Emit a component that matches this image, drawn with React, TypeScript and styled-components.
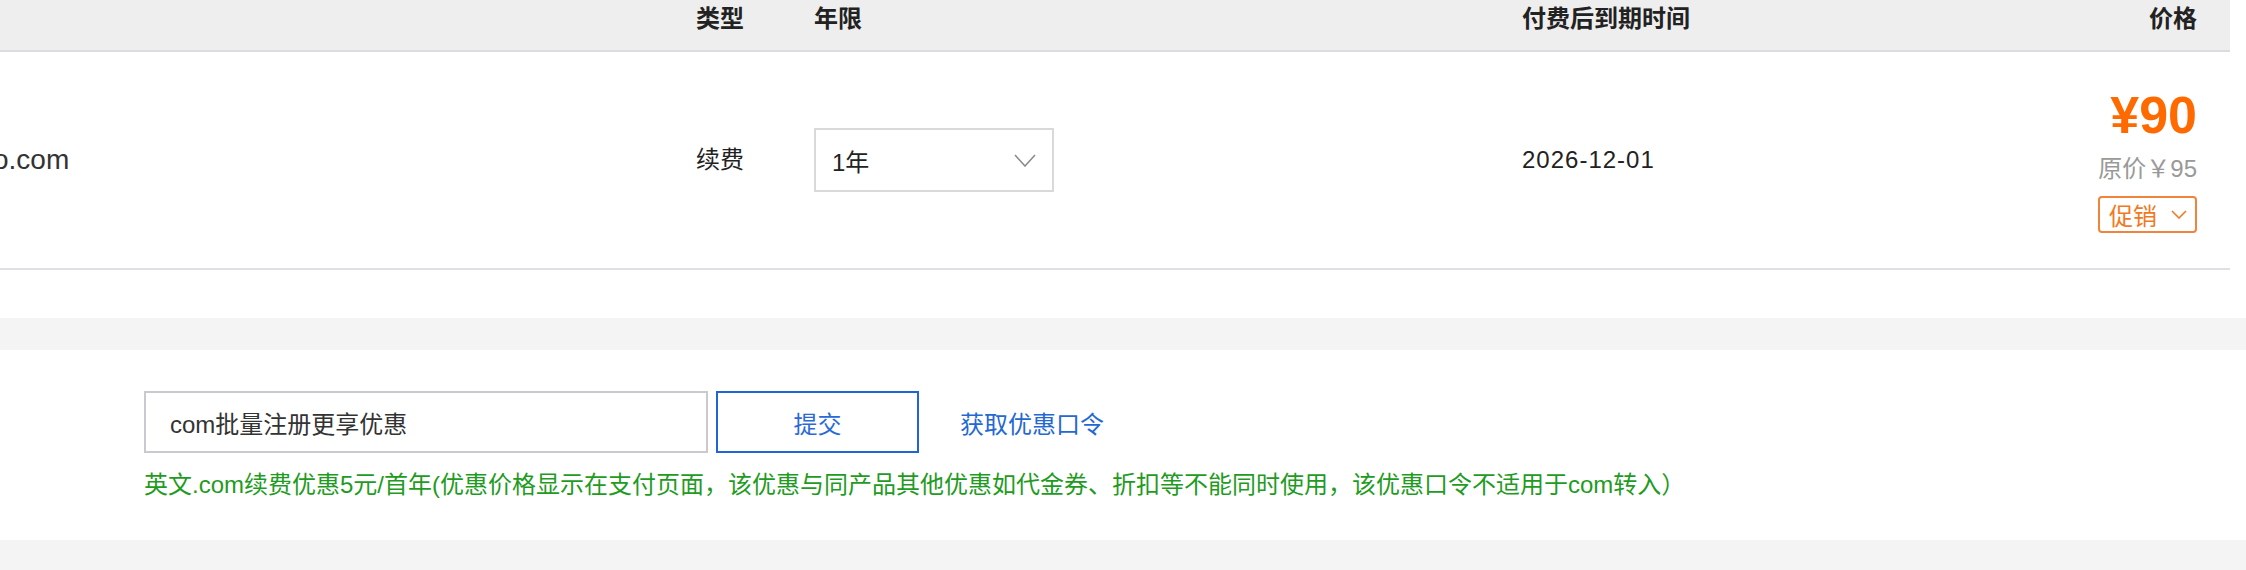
import React from 'react';
import styled, { createGlobalStyle } from 'styled-components';

const GlobalStyle = createGlobalStyle`
  html, body {
    margin: 0;
    padding: 0;
    background: #ffffff;
  }

  body {
    font-family: 'Liberation Sans', 'Noto Sans CJK SC', sans-serif;
    color: #333333;
    overflow: hidden;
  }
`;

const Page = styled.div`
  width: 2246px;
  display: flex;
  flex-direction: column;
`;

const Table = styled.div`
  width: 2230px;
  display: flex;
  flex-direction: column;
`;

const Grid = styled.div`
  display: grid;
  grid-template-columns: 696px 118px 708px 1fr auto;
  padding-right: 33px;
`;

const HeadRow = styled(Grid)`
  height: 52px;
  padding-top: 4px;
  box-sizing: border-box;
  background: #eeeeee;
  border-bottom: 2px solid #dcdce0;
  font-size: 24px;
  line-height: 30px;
  font-weight: 700;
  color: #222222;
`;

const HeadCell = styled.div<{ $right?: boolean }>`
  text-align: ${(props) => (props.$right ? 'right' : 'left')};
`;

const BodyRow = styled(Grid)`
  height: 218px;
  box-sizing: border-box;
  border-bottom: 2px solid #e0e0e4;
  align-items: center;
  font-size: 24px;
`;

const DomainCell = styled.div`
  overflow: hidden;
`;

const DomainName = styled.span`
  display: block;
  margin-left: -7px;
  font-size: 28px;
  color: #333333;
`;

const TextCell = styled.div<{ $spaced?: boolean }>`
  color: #222222;
  line-height: 24px;
  letter-spacing: ${(props) => (props.$spaced ? '1px' : '0')};
`;

const Select = styled.div`
  width: 240px;
  height: 64px;
  box-sizing: border-box;
  border: 2px solid #d9d9d9;
  padding: 0 16px 0 16px;
  display: flex;
  align-items: center;
  justify-content: space-between;
  color: #222222;
`;

const PriceCell = styled.div`
  display: flex;
  flex-direction: column;
  align-items: flex-end;
  margin-top: 3px;
`;

const Price = styled.div`
  font-size: 52px;
  line-height: 50px;
  font-weight: 700;
  color: #ff6a00;
`;

const OriginalPrice = styled.div`
  margin-top: 17px;
  font-size: 24px;
  line-height: 24px;
  color: #999999;
`;

const PromoTag = styled.div`
  margin-top: 15px;
  width: 99px;
  height: 37px;
  box-sizing: border-box;
  border: 2px solid #f0843a;
  border-radius: 4px;
  padding: 0 8px 0 9px;
  display: flex;
  align-items: center;
  justify-content: space-between;
  font-size: 24px;
  color: #f07a22;
`;

const Gap = styled.div`
  height: 48px;
`;

const Band = styled.div<{ $height: number }>`
  height: ${(props) => props.$height}px;
  background: #f4f4f4;
`;

const CouponPanel = styled.div`
  height: 190px;
  box-sizing: border-box;
  padding: 41px 0 0 144px;
  display: flex;
  flex-direction: column;
`;

const CouponForm = styled.div`
  display: flex;
  align-items: center;
`;

const CouponInput = styled.div`
  width: 564px;
  height: 62px;
  box-sizing: border-box;
  border: 2px solid #cacace;
  padding-left: 24px;
  display: flex;
  align-items: center;
  font-size: 24px;
  color: #333333;
`;

const SubmitButton = styled.div`
  margin-left: 8px;
  width: 203px;
  height: 62px;
  box-sizing: border-box;
  border: 2px solid #1f66d4;
  display: flex;
  align-items: center;
  justify-content: center;
  font-size: 24px;
  color: #2a6ad6;
`;

const CouponLink = styled.a`
  margin-left: 41px;
  font-size: 24px;
  color: #2468d2;
  text-decoration: none;
`;

const CouponNote = styled.div`
  margin-top: 20px;
  font-size: 24px;
  line-height: 24px;
  color: #1f9b1f;
  white-space: nowrap;
`;

const Chevron = ({ w, h, color }: { w: number; h: number; color: string }) => (
  <svg width={w} height={h} viewBox={`0 0 ${w} ${h}`} fill='none'>
    <polyline
      points={`1,1 ${w / 2},${h - 1} ${w - 1},1`}
      stroke={color}
      strokeWidth='1.6'
      strokeLinejoin='miter'
    />
  </svg>
);

const App = () => {
  return (
    <Page>
      <GlobalStyle />
      <Table>
        <HeadRow>
          <HeadCell />
          <HeadCell>类型</HeadCell>
          <HeadCell>年限</HeadCell>
          <HeadCell>付费后到期时间</HeadCell>
          <HeadCell $right>价格</HeadCell>
        </HeadRow>
        <BodyRow>
          <DomainCell>
            <DomainName>o.com</DomainName>
          </DomainCell>
          <TextCell>续费</TextCell>
          <div>
            <Select>
              <span>1年</span>
              <Chevron w={22} h={13} color='#8c8c8c' />
            </Select>
          </div>
          <TextCell $spaced>2026-12-01</TextCell>
          <PriceCell>
            <Price>¥90</Price>
            <OriginalPrice>原价￥95</OriginalPrice>
            <PromoTag>
              <span>促销</span>
              <Chevron w={16} h={9} color='#f07a22' />
            </PromoTag>
          </PriceCell>
        </BodyRow>
      </Table>
      <Gap />
      <Band $height={32} />
      <CouponPanel>
        <CouponForm>
          <CouponInput>com批量注册更享优惠</CouponInput>
          <SubmitButton>提交</SubmitButton>
          <CouponLink href='#'>获取优惠口令</CouponLink>
        </CouponForm>
        <CouponNote>
          英文.com续费优惠5元/首年(优惠价格显示在支付页面，该优惠与同产品其他优惠如代金券、折扣等不能同时使用，该优惠口令不适用于com转入）
        </CouponNote>
      </CouponPanel>
      <Band $height={30} />
    </Page>
  );
};

export default App;
